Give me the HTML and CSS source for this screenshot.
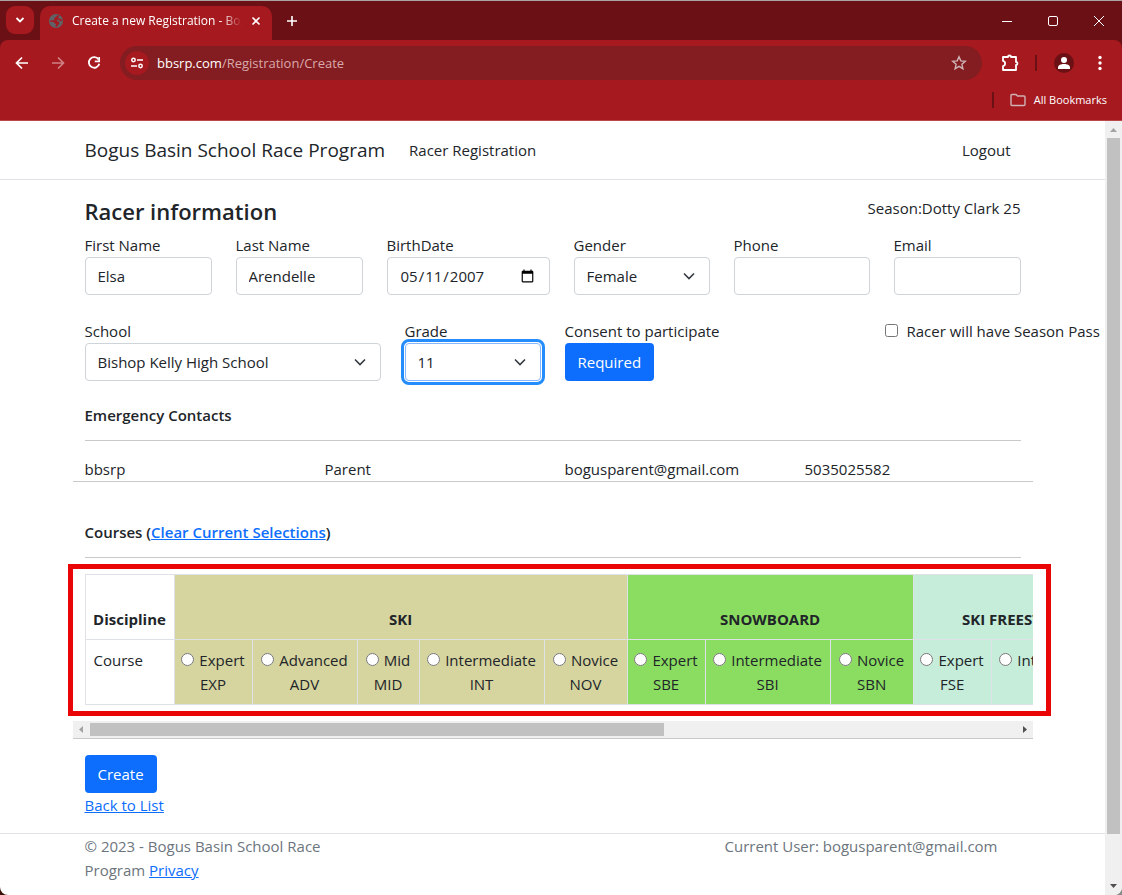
FILE: index.html
```html
<!DOCTYPE html>
<html lang="en">
<head>
<meta charset="utf-8">
<title>Create a new Registration - Bogus Basin School Race Program</title>
<link rel="stylesheet" href="styles.css">
</head>
<body>
<header class="browser">
  <div class="tabstrip">
    <button class="tab-search" aria-label="Search tabs"><svg width="12" height="12" viewBox="0 0 12 12"><path d="M2.500 4l3.500 3.500L9.500 4" fill="none" stroke="#fff" stroke-width="1.800"/></svg></button>
    <div class="tab">
      <svg class="favicon" width="16" height="16" viewBox="0 0 16 16"><circle cx="8" cy="8" r="7" fill="#5f6368"/><path d="M10 2c-1.500.3-1.200 1.800-2.500 2.200S6 5.200 6.500 6.500 4.200 7 2.500 7.500L2 9c2-.3 3.500-.2 4.200.8s2 .7 1.800 2.200l-1 2 2-.3c.3-1.700 2.500-2 2.300-3.700S9 8.500 8.800 7.200s2-.7 2.700.3 2 .5 2.800.3L14 6.500c-1.500.3-2-1-3.300-1.200S10.500 3.700 11.500 2.800z" fill="#a5191f"/></svg>
      <span class="tab-title">Create a new Registration - Bogus</span>
      <button class="icon-btn tab-close" aria-label="Close tab"><svg width="12" height="12" viewBox="0 0 12 12"><path d="M2.500 2.500l7 7M9.500 2.500l-7 7" stroke="#fff" stroke-width="1.600"/></svg></button>
    </div>
    <button class="icon-btn new-tab" aria-label="New tab"><svg width="12" height="12" viewBox="0 0 12 12"><path d="M6 1v10M1 6h10" stroke="#fff" stroke-width="1.600"/></svg></button>
    <div class="window-controls">
      <button class="icon-btn" aria-label="Minimize"><svg width="12" height="12" viewBox="0 0 12 12"><path d="M1 6.500h10" stroke="#fff"/></svg></button>
      <button class="icon-btn" aria-label="Maximize"><svg width="12" height="12" viewBox="0 0 12 12"><rect x="1.500" y="1.500" width="9" height="9" rx="1.500" fill="none" stroke="#fff"/></svg></button>
      <button class="icon-btn" aria-label="Close"><svg width="12" height="12" viewBox="0 0 12 12"><path d="M1 1l10 10M11 1L1 11" stroke="#fff"/></svg></button>
    </div>
  </div>
  <div class="chrome-body">
    <div class="toolbar">
      <button class="icon-btn nav-btn" aria-label="Back"><svg width="16" height="16" viewBox="0 0 16 16"><path d="M14 8H3M8 2.500L2.500 8 8 13.500" fill="none" stroke="#fff" stroke-width="1.700"/></svg></button>
      <button class="icon-btn nav-btn dim" aria-label="Forward"><svg width="16" height="16" viewBox="0 0 16 16"><path d="M2 8h11M8 2.500L13.500 8 8 13.500" fill="none" stroke="#fff" stroke-width="1.700"/></svg></button>
      <button class="icon-btn nav-btn" aria-label="Reload"><svg width="16" height="16" viewBox="0 0 16 16"><path d="M12.600 4.500A5.300 5.300 0 1 0 13.300 8.800" fill="none" stroke="#fff" stroke-width="1.800"/><path d="M13.200 2v4.300H8.800" fill="none" stroke="#fff" stroke-width="1.700"/></svg></button>
      <div class="omnibox">
        <button class="icon-btn site-info" aria-label="Site information"><svg width="14" height="14" viewBox="0 0 14 14"><g fill="none" stroke="#fff" stroke-width="1.500"><circle cx="3.500" cy="4" r="1.700"/><path d="M7 4h6M1 10h6"/><circle cx="10.500" cy="10" r="1.700"/></g></svg></button>
        <span class="url"><b>bbsrp.com</b>/Registration/Create</span>
        <button class="icon-btn" aria-label="Bookmark this tab"><svg width="16" height="16" viewBox="0 0 16 16"><path d="M8 1.800l1.800 4.100 4.500.4-3.400 3 1 4.400L8 11.400l-3.900 2.300 1-4.400-3.400-3 4.500-.4z" fill="none" stroke="#cfb3b5" stroke-width="1.400"/></svg></button>
      </div>
      <button class="icon-btn extensions" aria-label="Extensions"><svg width="18" height="18" viewBox="0 0 18 18"><path d="M2 3h5a1.500 1.500 0 0 1 3 0H15v5a1.500 1.500 0 0 1 0 3V16H2v-3.800c2.800-.6 2.800-4.700 0-5.300z" fill="none" stroke="#fff" stroke-width="1.800" stroke-linejoin="round"/></svg></button>
      <span class="divider"></span>
      <button class="icon-btn profile" aria-label="Profile"><svg width="20" height="20" viewBox="0 0 20 20"><circle cx="10" cy="10" r="10" fill="#6b1014"/><circle cx="10" cy="7" r="3" fill="#fff"/><path d="M4 16v-1.500c0-2.500 3-3.500 6-3.500s6 1 6 3.500V16z" fill="#fff"/></svg></button>
      <button class="icon-btn more" aria-label="Menu"><svg width="6" height="16" viewBox="0 0 6 16"><g fill="#fff"><circle cx="3" cy="2.500" r="1.700"/><circle cx="3" cy="8" r="1.700"/><circle cx="3" cy="13.500" r="1.700"/></g></svg></button>
    </div>
    <div class="bookmarks">
      <span class="divider"></span>
      <button class="all-bookmarks"><svg width="16" height="14" viewBox="0 0 16 14"><path d="M1 2.500q0-1 1-1h4l1.500 1.500H14q1 0 1 1V11.500q0 1-1 1H2q-1 0-1-1z" fill="none" stroke="#cfb3b5" stroke-width="1.400"/></svg>All Bookmarks</button>
    </div>
  </div>
</header>
<div class="viewport">
  <div class="page">
    <nav class="navbar">
      <div class="container nav-row">
        <a class="brand" href="#">Bogus Basin School Race Program</a>
        <a class="nav-link" href="#">Racer Registration</a>
        <button class="logout">Logout</button>
      </div>
    </nav>
    <main class="container">
      <form>
        <div class="title-row">
          <h1>Racer information</h1>
          <span>Season:Dotty Clark 25</span>
        </div>
        <div class="fields person">
          <div><label for="first">First Name</label><input class="control" id="first" type="text" value="Elsa"></div>
          <div><label for="last">Last Name</label><input class="control" id="last" type="text" value="Arendelle"></div>
          <div><label for="birth">BirthDate</label><input class="control" id="birth" type="date" value="2007-05-11"></div>
          <div><label for="gender">Gender</label><div class="select"><select class="control" id="gender"><option>Female</option></select><svg width="12" height="12" viewBox="0 0 12 12"><path d="M1 3.500l5 5 5-5"/></svg></div></div>
          <div><label for="phone">Phone</label><input class="control" id="phone" type="tel"></div>
          <div><label for="email">Email</label><input class="control" id="email" type="email"></div>
        </div>
        <div class="fields school">
          <div><label for="school">School</label><div class="select"><select class="control" id="school"><option>Bishop Kelly High School</option></select><svg width="12" height="12" viewBox="0 0 12 12"><path d="M1 3.500l5 5 5-5"/></svg></div></div>
          <div><label for="grade">Grade</label><div class="select"><select class="control focused" id="grade"><option>11</option></select><svg width="12" height="12" viewBox="0 0 12 12"><path d="M1 3.500l5 5 5-5"/></svg></div></div>
          <div><label for="consent">Consent to participate</label><button class="btn" id="consent" type="button">Required</button></div>
          <div class="check"><input type="checkbox" id="pass"><label for="pass">Racer will have Season Pass</label></div>
        </div>
        <h2>Emergency Contacts</h2>
        <hr>
        <div class="contacts bleed"><span>bbsrp</span><span>Parent</span><span>bogusparent@gmail.com</span><span>5035025582</span></div>
        <h2 class="courses-title">Courses (<a href="#">Clear Current Selections</a>)</h2>
        <hr>
        <section class="courses bleed">
          <div class="table-clip">
            <table>
              <colgroup><col class="w-first"><col class="w-expert"><col class="w-adv"><col class="w-mid"><col class="w-int"><col class="w-nov"><col class="w-expert"><col class="w-int"><col class="w-nov"><col class="w-expert"><col class="w-int"></colgroup>
              <thead>
                <tr><th>Discipline</th><th class="ski" colspan="5">SKI</th><th class="board" colspan="3">SNOWBOARD</th><th class="free" colspan="2">SKI FREESTYLE</th></tr>
              </thead>
              <tbody>
                <tr>
                  <td class="row-name">Course</td>
                  <td class="ski"><label><input type="radio" name="course">Expert<br>EXP</label></td>
                  <td class="ski"><label><input type="radio" name="course">Advanced<br>ADV</label></td>
                  <td class="ski"><label><input type="radio" name="course">Mid<br>MID</label></td>
                  <td class="ski"><label><input type="radio" name="course">Intermediate<br>INT</label></td>
                  <td class="ski"><label><input type="radio" name="course">Novice<br>NOV</label></td>
                  <td class="board"><label><input type="radio" name="course">Expert<br>SBE</label></td>
                  <td class="board"><label><input type="radio" name="course">Intermediate<br>SBI</label></td>
                  <td class="board"><label><input type="radio" name="course">Novice<br>SBN</label></td>
                  <td class="free"><label><input type="radio" name="course">Expert<br>FSE</label></td>
                  <td class="free"><label><input type="radio" name="course">Intermediate<br>FSI</label></td>
                </tr>
              </tbody>
            </table>
          </div>
          <div class="hscroll"><svg width="17" height="17" viewBox="0 0 17 17"><path d="M10 5v7L6 8.500z" fill="#a3a3a3"/></svg><div class="htrack"><div class="hthumb"></div></div><svg width="17" height="17" viewBox="0 0 17 17"><path d="M7 5v7l4-3.500z" fill="#505050"/></svg></div>
          <div class="highlight"></div>
        </section>
        <button class="btn create" type="button">Create</button>
        <a class="back" href="#">Back to List</a>
      </form>
    </main>
    <footer>
      <div class="container foot-row">
        <span>© 2023 - Bogus Basin School Race Program <a href="#">Privacy</a></span>
        <span class="user">Current User: bogusparent@gmail.com</span>
      </div>
    </footer>
  </div>
  <div class="vscroll"><svg width="17" height="17" viewBox="0 0 17 17"><path d="M5 11h7L8.500 7z" fill="#a3a3a3"/></svg><div class="vtrack"><div class="vthumb"></div></div><svg width="17" height="17" viewBox="0 0 17 17"><path d="M5 6h7l-3.500 4z" fill="#505050"/></svg></div>
</div>
</body>
</html>
```

FILE: styles.css
```css
* { box-sizing: border-box; }
html { background: linear-gradient(to right, #3a1208 50%, #8a8a8a 50%); }
body {
  margin: 0;
  min-height: 100vh;
  display: flex;
  flex-direction: column;
  overflow: hidden;
  border-radius: 0 0 8px 8px;
  background: #fff;
  color: #212529;
  font: 15px/24px "Open Sans", "Noto Sans", sans-serif;
}
button, input, select { font: inherit; color: inherit; }
button { border: 0; padding: 0; background: none; }
svg { display: block; flex: none; }
a { color: #0d6efd; }

.browser { background: #6b1014; color: #fff; }
.tabstrip {
  display: flex;
  height: 40px;
  padding: 5px 0 0 6px;
  border-top: 1px solid #a9a3a3;
}
.tab-search {
  display: grid;
  place-items: center;
  width: 28px;
  height: 28px;
  border-radius: 9px;
  background: #a5191f;
}
.tab {
  display: flex;
  align-items: center;
  width: 232px;
  margin-left: 6px;
  padding: 0 8px 5px;
  border-radius: 10px 10px 0 0;
  background: #a5191f;
  font-size: 12px;
}
.tab-title {
  flex: 1;
  margin: 0 6px 0 8px;
  white-space: nowrap;
  overflow: hidden;
  mask-image: linear-gradient(to right, #000 88%, transparent);
}
.icon-btn { display: grid; place-items: center; flex: none; }
.tab-close { width: 16px; height: 16px; }
.new-tab { width: 40px; height: 29px; }
.window-controls { display: flex; margin-left: auto; }
.window-controls .icon-btn { width: 46px; height: 29px; }
.chrome-body {
  background: #a5191f;
  border-radius: 8px 8px 0 0;
  border-bottom: 1px solid #b8474c;
}
.toolbar { display: flex; align-items: center; height: 46px; padding: 0 19px 0 4px; }
.nav-btn { width: 36px; height: 34px; }
.dim { opacity: .45; }
.omnibox {
  display: flex;
  align-items: center;
  flex: 1;
  height: 34px;
  margin-left: 8px;
  padding: 0 15px 0 5px;
  border-radius: 17px;
  background: #831d21;
}
.site-info { width: 24px; height: 24px; border-radius: 50%; background: #a5191f; }
.url { flex: 1; margin-left: 8px; font-size: 13px; color: #d9a9ab; }
.url b { font-weight: 400; color: #fff; }
.extensions { margin-left: 19px; }
.divider { width: 2px; height: 16px; background: #6b1014; }
.toolbar .divider { margin: 0 17px 0 16px; }
.more { margin-left: 23px; }
.bookmarks {
  display: flex;
  justify-content: flex-end;
  align-items: center;
  gap: 16px;
  height: 34px;
  padding: 0 15px 6px 0;
}
.all-bookmarks { display: flex; align-items: center; gap: 8px; font-size: 11px; }

.viewport { display: flex; flex: 1; }
.page { flex: 1; min-width: 0; }
.container { max-width: 960px; margin: 0 auto; padding: 0 12px; }
.bleed { margin-left: -12px; margin-right: -12px; }
.navbar { border-bottom: 1px solid #dee2e6; }
.nav-row { display: flex; align-items: center; height: 58px; }
.brand { font-size: 19px; margin-right: 24px; }
.brand, .nav-link { color: #212529; text-decoration: none; }
.logout { margin-left: auto; margin-right: 10px; }

.title-row { display: flex; justify-content: space-between; padding: 16px 0 7px; }
h1 { margin: 0; font-size: 22px; font-weight: 600; line-height: 30px; }
h2 { margin: 0; font-size: 15px; font-weight: 600; line-height: 20px; }
hr { margin: 15px 0 16px; border: 0; border-top: 1px solid #c8c9ca; }
.fields { display: grid; column-gap: 24px; }
.fields label { display: block; white-space: nowrap; }
.person { grid-template-columns: 127fr 127fr 163fr 136fr 136fr 127fr; }
.school { grid-template-columns: 296fr 136fr 296fr 136fr; margin: 24px 0; }
.fields > div { min-width: 0; }
.control {
  display: block;
  width: 100%;
  height: 38px;
  padding: 0 12px;
  border: 1px solid #ced4da;
  border-radius: 4px;
  background: #fff;
  appearance: none;
}
.select { position: relative; }
.select svg {
  position: absolute;
  right: 15px;
  top: 13px;
  fill: none;
  stroke: #343a40;
  stroke-width: 1.6;
  pointer-events: none;
}
.focused { border-color: #86b7fe; outline: 3px solid #258cfb; outline-offset: 1px; }
.btn {
  display: block;
  height: 38px;
  padding: 0 13px;
  border-radius: 4px;
  background: #0d6efd;
  color: #fff;
}
.fields .check { display: flex; align-items: flex-start; gap: 9px; }
.check input { margin: 5px 0 0; flex: none; }

.contacts {
  display: grid;
  grid-template-columns: repeat(4, 1fr);
  border-bottom: 1px solid #c8c9ca;
}
.contacts span { padding-left: 12px; }
.courses-title { margin-top: 40px; }

.courses { position: relative; border-bottom: 1px solid #c8c9ca; }
.table-clip { padding-left: 12px; overflow: hidden; }
table { width: 1031px; table-layout: fixed; border-collapse: collapse; white-space: nowrap; }
th, td { padding: 8px 0; border: 1px solid #dee2e6; text-align: center; }
th { height: 65px; vertical-align: bottom; font-weight: 700; }
.row-name { padding-left: 8px; text-align: left; vertical-align: top; }
.w-first { width: 89px; }
.w-expert { width: 78px; }
.w-adv { width: 105px; }
.w-mid { width: 62px; }
.w-int { width: 125px; }
.w-nov { width: 83px; }
.ski { background: #d6d49f; }
.board { background: #8bdd62; }
.free { background: #c6ecda; }
td input { margin: 0 5px 0 0; }
.hscroll { display: flex; height: 17px; margin-top: 16px; background: #f0f0f0; }
.htrack { flex: 1; padding: 2px 0; }
.hthumb { width: 62%; height: 13px; background: #c1c1c1; }
.highlight {
  position: absolute;
  top: -10px;
  left: -5px;
  right: -18px;
  height: 152px;
  border: 5px solid #ea0606;
  pointer-events: none;
}
.create { margin-top: 16px; }

footer { margin-top: 16px; border-top: 1px solid #dee2e6; color: #6c757d; }
.foot-row { display: grid; grid-template-columns: repeat(3, 1fr); column-gap: 24px; }
.user { grid-column: 3; white-space: nowrap; }

.vscroll { display: flex; flex-direction: column; width: 17px; background: #f0f0f0; }
.vtrack { flex: 1; padding: 0 2px; }
.vthumb { height: 94%; background: #c1c1c1; }
```
